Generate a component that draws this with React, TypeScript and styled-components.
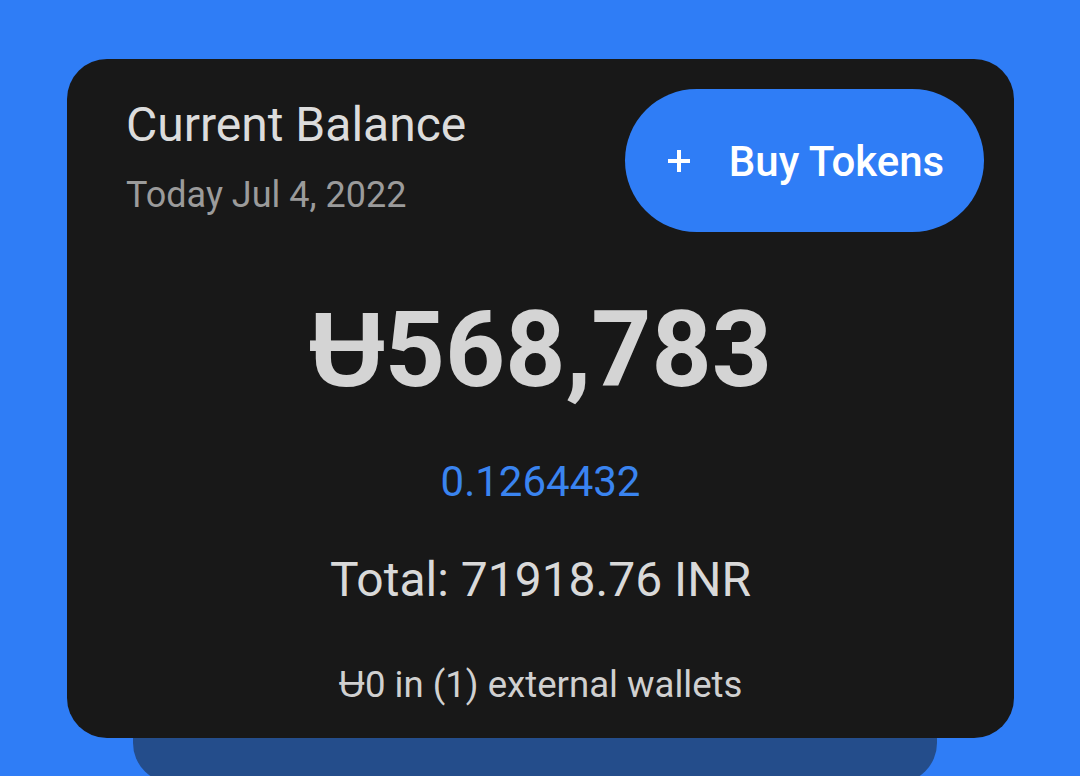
import styled, { createGlobalStyle } from "styled-components";

const GlobalStyle = createGlobalStyle`
  html, body {
    margin: 0;
    padding: 0;
    background-color: #2f7df6;
    font-family: Roboto, "Liberation Sans", sans-serif;
  }
  * {
    box-sizing: border-box;
  }
`;

const PlusIcon = () => (
  <svg width="24" height="24" viewBox="0 0 24 24" aria-hidden="true">
    <path d="M12 1v22M1 12h22" stroke="#ffffff" strokeWidth="4" />
  </svg>
);

const App = () => {
  return (
    <>
      <GlobalStyle />
      <Page>
        <CardStack>
          <BalanceCard>
            <Header>
              <TitleBlock>
                <Title>Current Balance</Title>
                <DateLine>Today Jul 4, 2022</DateLine>
              </TitleBlock>
              <BuyButton type="button">
                <PlusIcon />
                <span>Buy Tokens</span>
              </BuyButton>
            </Header>
            <Body>
              <Amount>Ʉ568,783</Amount>
              <Value $tone="accent" $size={42} $gap={58}>
                0.1264432
              </Value>
              <Value $tone="light" $size={48} $gap={53}>
                Total: 71918.76 INR
              </Value>
              <Value $tone="muted" $size={36.6} $gap={63}>
                Ʉ0 in (1) external wallets
              </Value>
            </Body>
          </BalanceCard>
        </CardStack>
      </Page>
    </>
  );
};

const Page = styled.div`
  width: 1080px;
  height: 776px;
  overflow: hidden;
  padding: 59px 66px 0 67px;
`;

const CardStack = styled.div`
  position: relative;

  /* the next card peeking out from underneath */
  &::before {
    content: "";
    position: absolute;
    left: 66px;
    right: 77px;
    bottom: -45px;
    height: 120px;
    background-color: #244d8b;
    border-radius: 40px;
  }
`;

const BalanceCard = styled.div`
  position: relative;
  height: 679px;
  background-color: #181818;
  border-radius: 40px;
  padding: 30px 30px 32px 30px;
  display: flex;
  flex-direction: column;
`;

const Header = styled.div`
  display: flex;
  justify-content: space-between;
  align-items: flex-start;
`;

const TitleBlock = styled.div`
  display: flex;
  flex-direction: column;
  padding: 12px 0 0 29px;
`;

const Title = styled.div`
  font-size: 48px;
  line-height: 1;
  color: #dcdcdc;
`;

const DateLine = styled.div`
  margin-top: 28px;
  font-size: 36px;
  line-height: 1;
  color: #9b9b9b;
`;

const BuyButton = styled.button`
  width: 359px;
  height: 143px;
  border: none;
  border-radius: 72px;
  background-color: #2f7df6;
  color: #ffffff;
  display: flex;
  align-items: center;
  justify-content: center;
  gap: 38px;
  padding: 3px 0 0 2px;
  font-family: Roboto, "Liberation Sans", sans-serif;
  font-size: 42px;
  font-weight: 500;
  line-height: 1;
  cursor: pointer;

  svg {
    margin-top: -2px;
  }
`;

const Body = styled.div`
  display: flex;
  flex-direction: column;
  align-items: center;
  padding-top: 66px;
`;

const Amount = styled.div`
  font-size: 105px;
  font-weight: 700;
  line-height: 1;
  color: #d4d4d4;
`;

const tones = {
  accent: "#3a84f0",
  light: "#d9d9d9",
  muted: "#d0d0d0",
};

const Value = styled.div<{ $tone: keyof typeof tones; $size: number; $gap: number }>`
  margin-top: ${(p) => p.$gap}px;
  font-size: ${(p) => p.$size}px;
  line-height: 1;
  color: ${(p) => tones[p.$tone]};
`;

export default App;
